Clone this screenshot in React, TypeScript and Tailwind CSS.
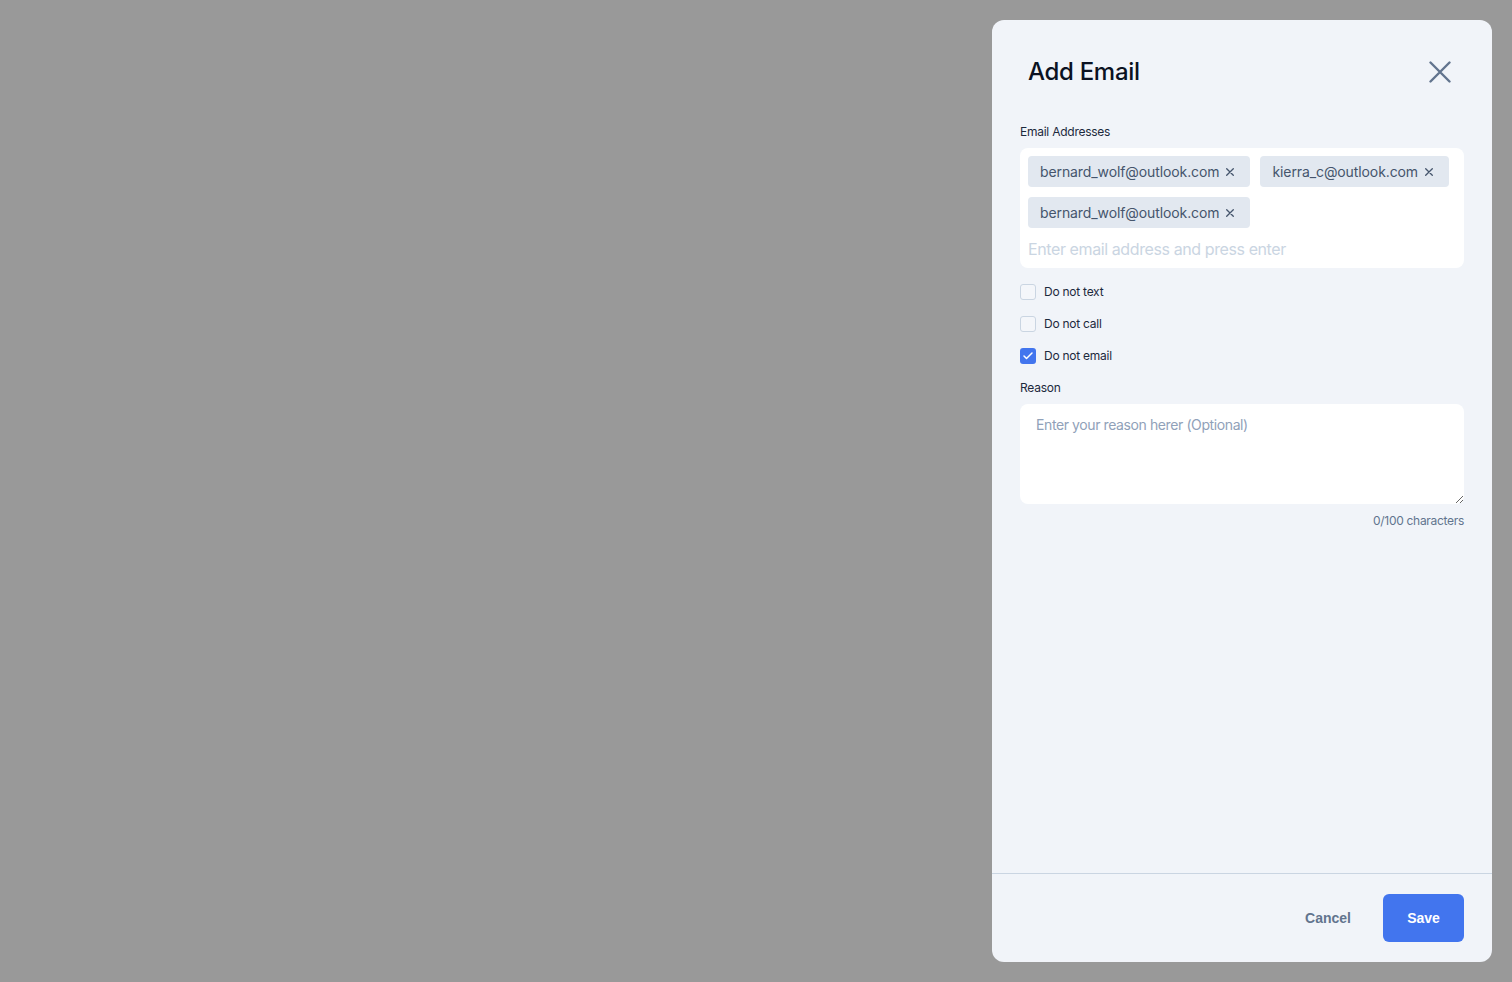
import { Check } from "lucide-react"

const emails = ["bernard_wolf@outlook.com", "kierra_c@outlook.com", "bernard_wolf@outlook.com"]

const options = [
  { label: "Do not text", checked: false },
  { label: "Do not call", checked: false },
  { label: "Do not email", checked: true },
]

function SmallX() {
  return (
    <svg width="8" height="8" viewBox="0 0 8 8" className="text-slate-600 shrink-0">
      <path d="M0.7 0.7L7.3 7.3M7.3 0.7L0.7 7.3" stroke="currentColor" strokeWidth="1.3" strokeLinecap="round" />
    </svg>
  )
}

export default function App() {
  return (
    <div className="min-h-screen h-[982px] bg-[#999999] flex justify-end p-5 font-['Inter',sans-serif]">
      <div className="w-[500px] h-[942px] bg-[#f1f4f9] rounded-xl flex flex-col">
        {/* Header */}
        <div className="flex items-center justify-between pl-9 pr-[41px] pt-9">
          <h2 className="text-2xl leading-8 text-[#0b1222] font-medium tracking-[-0.3px]">Add Email</h2>
          <button className="text-slate-500">
            <svg width="22" height="22" viewBox="0 0 22 22">
              <path d="M1.5 1.5L20.5 20.5M20.5 1.5L1.5 20.5" stroke="currentColor" strokeWidth="2.4" strokeLinecap="round" />
            </svg>
          </button>
        </div>

        {/* Body */}
        <div className="flex-1 px-7 pt-9">
          <label className="block text-xs leading-4 text-slate-800 tracking-[-0.25px]">Email Addresses</label>
          <div className="mt-2 bg-white rounded-lg px-2 pt-2 pb-[7px]">
            <div className="flex flex-wrap gap-[10px]">
              {emails.map((email, i) => (
                <span
                  key={i}
                  className="h-[31px] flex items-center gap-[7px] pl-3 pr-4 bg-slate-200 rounded text-sm text-slate-600 tracking-[-0.1px] whitespace-nowrap"
                >
                  {email}
                  <SmallX />
                </span>
              ))}
            </div>
            <input
              className="mt-[9px] w-full h-6 text-base tracking-[-0.4px] outline-none placeholder:text-slate-300 bg-transparent"
              placeholder="Enter email address and press enter"
            />
          </div>

          <div className="mt-4 flex flex-col gap-4">
            {options.map((opt) => (
              <label key={opt.label} className="flex items-center gap-2 h-4">
                {opt.checked ? (
                  <span className="w-4 h-4 rounded-[3px] bg-[#4275ee] flex items-center justify-center">
                    <Check className="w-3 h-3 text-white" strokeWidth={3} />
                  </span>
                ) : (
                  <span className="w-4 h-4 rounded-[3px] border border-slate-300 bg-[#f4f6fa]" />
                )}
                <span className="text-xs leading-4 text-slate-800 tracking-[-0.25px]">{opt.label}</span>
              </label>
            ))}
            <label className="block text-xs leading-4 text-slate-800 tracking-[-0.25px]">Reason</label>
          </div>

          <textarea
            className="mt-2 block w-full h-[100px] bg-white rounded-lg px-4 py-[11px] text-sm tracking-[-0.4px] outline-none placeholder:text-slate-400"
            placeholder="Enter your reason herer (Optional)"
          />
          <p className="mt-[9px] text-right text-xs leading-4 text-slate-500 tracking-[-0.3px]">0/100 characters</p>
        </div>

        {/* Footer */}
        <div className="border-t border-slate-300 flex items-center justify-end gap-2 px-7 py-5">
          <button className="h-12 px-6 text-sm font-bold text-slate-500 font-['Liberation_Sans',sans-serif]">
            Cancel
          </button>
          <button className="h-12 w-[81px] rounded-md bg-[#4275ee] text-sm font-bold text-white font-['Liberation_Sans',sans-serif]">
            Save
          </button>
        </div>
      </div>
    </div>
  )
}
